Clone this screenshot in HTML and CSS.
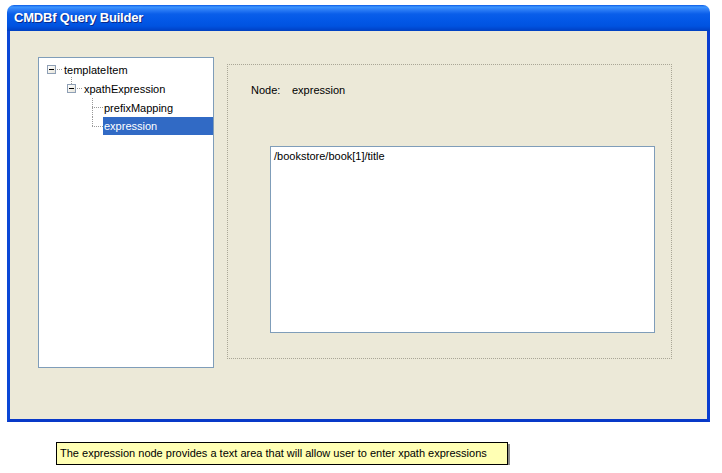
FILE: index.html
```html
<!DOCTYPE html>
<html>
<head>
<meta charset="utf-8">
<link rel="stylesheet" href="styles.css">
</head>
<body>
<div class="window">
  <div class="titlebar"><span class="title">CMDBf Query Builder</span></div>
  <div class="client">
    <div class="tree">
      <div class="row r1"><span class="box"></span><span class="hline"></span><span class="label">templateItem</span></div>
      <div class="row r2"><span class="box up"></span><span class="hline"></span><span class="label">xpathExpression</span></div>
      <div class="row r3"><span class="elbow"></span><span class="label">prefixMapping</span></div>
      <div class="row r4"><span class="elbow last"></span><span class="label selected">expression</span></div>
    </div>
    <div class="detail">
      <div class="node-row"><span class="node-key">Node:</span><span class="node-val">expression</span></div>
      <div class="editor">/bookstore/book[1]/title</div>
    </div>
  </div>
</div>
<div class="tooltip">The expression node provides a text area that will allow user to enter xpath expressions</div>
</body>
</html>
```
FILE: styles.css
```css
html, body {
  margin: 0;
  padding: 0;
  background: #ffffff;
  font-family: "Liberation Sans", Arial, sans-serif;
  font-size: 11px;
  color: #000;
}
.window {
  margin: 5px 0 0 7px;
  width: 703px;
}
.titlebar {
  height: 26px;
  border-radius: 7px 7px 0 0;
  background: linear-gradient(to bottom, #0A5AE6 0px, #3D95FF 2px, #2A7BF5 5px, #0A5EEA 9px, #0257E6 16px, #0053E0 21px, #0047CF 24px, #0040C0 26px);
  display: flex;
  align-items: center;
  padding-left: 7px;
  box-sizing: border-box;
}
.title {
  color: #fff;
  font-weight: bold;
  font-size: 13px;
  letter-spacing: -0.2px;
  text-shadow: 1px 1px 0 #0A2A8A;
  margin-top: -1px;
}
.client {
  height: 391px;
  box-sizing: border-box;
  background: #ECE9D8;
  border: 3px solid #0A3ED0;
  border-top: none;
  border-left-color: #0B47D6;
  border-bottom-color: #0839C8;
  display: flex;
  align-items: flex-start;
  padding: 26px 0 0 28px;
}
.tree {
  width: 176px;
  height: 311px;
  box-sizing: border-box;
  background: #fff;
  border: 1px solid #7F9DB9;
  padding-top: 2px;
  flex: none;
}
.row {
  height: 19px;
  display: flex;
  align-items: center;
}
.r1 { padding-left: 8px; }
.r2 { padding-left: 28px; }
.r3, .r4 { padding-left: 53px; }
.box {
  width: 9px;
  height: 9px;
  box-sizing: border-box;
  border: 1px solid #8E9FB5;
  background: linear-gradient(to bottom right, #ffffff, #e6e4da);
  position: relative;
  flex: none;
}
.box::after {
  content: "";
  position: absolute;
  left: 1px;
  top: 3px;
  width: 5px;
  height: 1px;
  background: #000;
}
.box.up::before {
  content: "";
  position: absolute;
  left: 3px;
  top: -8px;
  width: 1px;
  height: 7px;
  background: repeating-linear-gradient(to bottom, #9a9a9a 0 1px, transparent 1px 2px);
}
.hline {
  width: 7px;
  height: 1px;
  background: repeating-linear-gradient(to right, transparent 0 1px, #9a9a9a 1px 2px);
  flex: none;
}
.label {
  padding: 0 1px;
  line-height: 18px;
  white-space: nowrap;
}
.elbow {
  align-self: stretch;
  width: 11px;
  position: relative;
  flex: none;
}
.elbow::before {
  content: "";
  position: absolute;
  left: 0;
  top: 0;
  width: 1px;
  height: 19px;
  background: repeating-linear-gradient(to bottom, #9a9a9a 0 1px, transparent 1px 2px);
}
.elbow.last::before { height: 10px; }
.elbow::after {
  content: "";
  position: absolute;
  left: 0;
  top: 9px;
  width: 11px;
  height: 1px;
  background: repeating-linear-gradient(to right, #9a9a9a 0 1px, transparent 1px 2px);
}
.selected {
  flex: 1;
  background: #316AC5;
  color: #fff;
  align-self: stretch;
  line-height: 18px;
  margin-bottom: 1px;
}
.detail {
  margin: 7px 0 0 13px;
  width: 445px;
  height: 295px;
  box-sizing: border-box;
  border: 1px dotted #A9A696;
  padding: 19px 0 0 23px;
  flex: none;
}
.node-row {
  display: flex;
  line-height: 13px;
}
.node-key { width: 41px; }
.editor {
  margin: 49px 0 0 19px;
  width: 385px;
  height: 187px;
  box-sizing: border-box;
  background: #fff;
  border: 1px solid #7F9DB9;
  padding: 3px 3px;
  line-height: 13px;
}
.tooltip {
  margin: 20px 0 0 56px;
  width: 452px;
  height: 23px;
  box-sizing: border-box;
  background: #FFFFB4;
  border: 1px solid #000;
  box-shadow: 2px 2px 0 #8a8a8a;
  padding: 0 3px;
  line-height: 21px;
  white-space: nowrap;
}
```
